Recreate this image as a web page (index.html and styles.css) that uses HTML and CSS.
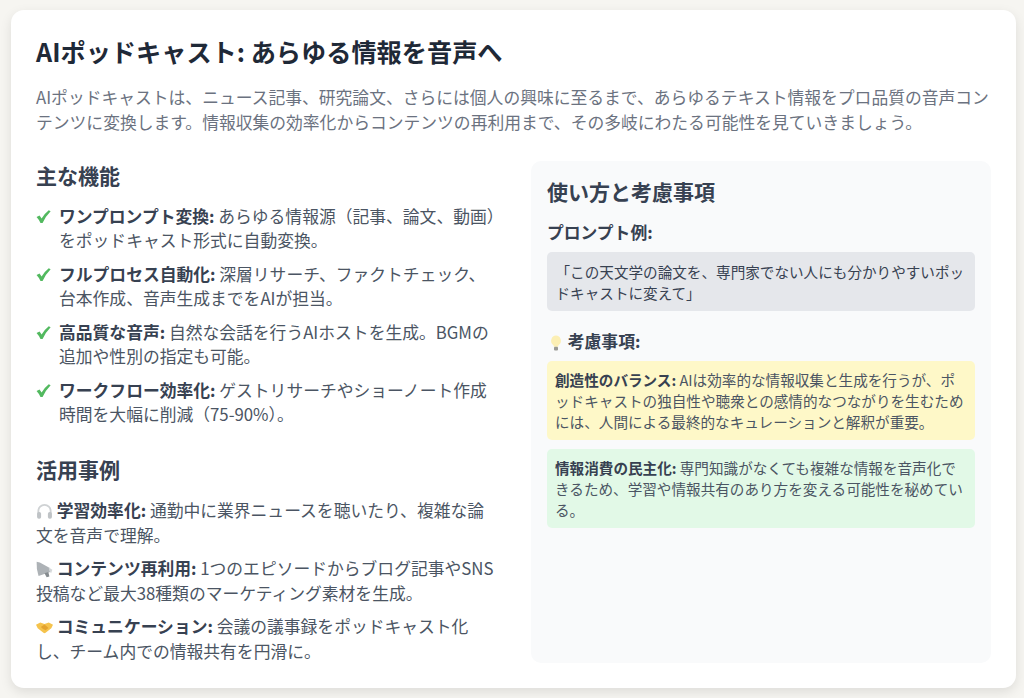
FILE: index.html
```html
<!DOCTYPE html>
<html lang="ja">
<head>
<meta charset="utf-8">
<title>AIポッドキャスト</title>
<link rel="stylesheet" href="styles.css">
</head>
<body>
<main class="card">
  <h1 class="title">AIポッドキャスト: あらゆる情報を音声へ</h1>
  <p class="lede">AIポッドキャストは、ニュース記事、研究論文、さらには個人の興味に至るまで、あらゆるテキスト情報をプロ品質の音声コンテンツに変換します。情報収集の効率化からコンテンツの再利用まで、その多岐にわたる可能性を見ていきましょう。</p>
  <div class="columns">
    <section class="left">
      <h2 class="heading heading-features">主な機能</h2>
      <ul class="features">
        <li class="feature"><svg class="check" viewBox="0 0 16 16"><path d="M0.6 8.6 L3.8 7 L6 10 Q9.4 4.4 13.6 1.2 L15.6 2.4 Q10.2 7.8 7 15 L4.8 15 Q3.2 11.4 0.6 8.6 Z" fill="#52b95f"/></svg><span><b>ワンプロンプト変換:</b> あらゆる情報源（記事、論文、動画）をポッドキャスト形式に自動変換。</span></li>
        <li class="feature"><svg class="check" viewBox="0 0 16 16"><path d="M0.6 8.6 L3.8 7 L6 10 Q9.4 4.4 13.6 1.2 L15.6 2.4 Q10.2 7.8 7 15 L4.8 15 Q3.2 11.4 0.6 8.6 Z" fill="#52b95f"/></svg><span><b>フルプロセス自動化:</b> 深層リサーチ、ファクトチェック、台本作成、音声生成までをAIが担当。</span></li>
        <li class="feature"><svg class="check" viewBox="0 0 16 16"><path d="M0.6 8.6 L3.8 7 L6 10 Q9.4 4.4 13.6 1.2 L15.6 2.4 Q10.2 7.8 7 15 L4.8 15 Q3.2 11.4 0.6 8.6 Z" fill="#52b95f"/></svg><span><b>高品質な音声:</b> 自然な会話を行うAIホストを生成。BGMの追加や性別の指定も可能。</span></li>
        <li class="feature"><svg class="check" viewBox="0 0 16 16"><path d="M0.6 8.6 L3.8 7 L6 10 Q9.4 4.4 13.6 1.2 L15.6 2.4 Q10.2 7.8 7 15 L4.8 15 Q3.2 11.4 0.6 8.6 Z" fill="#52b95f"/></svg><span><b>ワークフロー効率化:</b> ゲストリサーチやショーノート作成時間を大幅に削減（75-90%）。</span></li>
      </ul>
      <h2 class="heading heading-usecases">活用事例</h2>
      <p class="usecase"><svg class="emoji" viewBox="0 0 16 16"><path d="M2.2 10 V7.6 a5.8 5.8 0 0 1 11.6 0 V10" fill="none" stroke="#cfd2d4" stroke-width="1.7"/><rect x="1" y="8.4" width="3.8" height="6.4" rx="1.7" fill="#bfc3c6"/><rect x="11.2" y="8.4" width="3.8" height="6.4" rx="1.7" fill="#bfc3c6"/></svg> <b>学習効率化:</b> 通勤中に業界ニュースを聴いたり、複雑な論文を音声で理解。</p>
      <p class="usecase"><svg class="emoji" viewBox="0 0 16 16"><path d="M0.6 0.6 L3.6 1.4 L13 6.6 L14 10 L2.4 14 Q0.2 7 0.6 0.6 Z" fill="#adb2b6"/><path d="M8 11.6 L11.6 10.4 L12.6 14.6 L10 15.4 Z" fill="#858b8f"/><path d="M12 6 L15.4 8.2 L14.2 11.6 L12.6 9.4 Z" fill="#d5d8da"/></svg> <b>コンテンツ再利用:</b> 1つのエピソードからブログ記事やSNS投稿など最大38種類のマーケティング素材を生成。</p>
      <p class="usecase"><svg class="emoji" viewBox="0 0 16 16"><path d="M0 5.4 L4 3.4 L8 4.6 L12 3.4 L16 5.4 L14.4 8.6 L9 13 Q8 13.6 7 13 L1.6 8.6 Z" fill="#f5c34d"/><path d="M4.6 7.6 L8 5.2 L11.8 8.4 L9 10.6 L6.6 9.4 Z" fill="#e3a32f"/></svg> <b>コミュニケーション:</b> 会議の議事録をポッドキャスト化し、チーム内での情報共有を円滑に。</p>
    </section>
    <aside class="panel">
      <h2 class="heading panel-heading">使い方と考慮事項</h2>
      <h3 class="subheading">プロンプト例:</h3>
      <div class="prompt">「この天文学の論文を、専門家でない人にも分かりやすいポッドキャストに変えて」</div>
      <h3 class="subheading subheading-tips"><svg class="bulb" viewBox="0 0 12 16"><path d="M6 0.6 a5.2 5.2 0 0 1 3 9.2 q-0.8 0.7 -0.9 2 H3.9 q-0.1 -1.3 -0.9 -2 a5.2 5.2 0 0 1 3 -9.2 Z" fill="#fcefb4"/><rect x="4" y="11.8" width="4" height="3.6" rx="1" fill="#9a9a94"/></svg> 考慮事項:</h3>
      <div class="note note-yellow"><b>創造性のバランス:</b> AIは効率的な情報収集と生成を行うが、ポッドキャストの独自性や聴衆との感情的なつながりを生むためには、人間による最終的なキュレーションと解釈が重要。</div>
      <div class="note note-green"><b>情報消費の民主化:</b> 専門知識がなくても複雑な情報を音声化できるため、学習や情報共有のあり方を変える可能性を秘めている。</div>
    </aside>
  </div>
</main>
</body>
</html>
```
FILE: styles.css
```css
* { box-sizing: border-box; }
html, body { height: 100%; }
body {
  margin: 0;
  padding: 10px 8px 10px 11px;
  background: #f6f5f1;
  font-family: "Noto Sans CJK JP", "Noto Sans", sans-serif;
  color: #4b5563;
  overflow: hidden;
}
.card {
  height: 678px;
  padding: 25px;
  background: #fff;
  border-radius: 13px;
  box-shadow: 0 4px 12px rgba(0, 0, 0, 0.1);
  display: flex;
  flex-direction: column;
}
.title {
  margin: 0 0 18px;
  font-size: 25.2px;
  line-height: 32px;
  font-weight: 700;
  color: #1f2937;
}
.lede {
  margin: 0 0 26px;
  font-size: 16.8px;
  line-height: 25px;
  color: #6b7280;
}
.columns {
  flex: 1;
  display: grid;
  grid-template-columns: 460px 460px;
  grid-template-rows: minmax(0, 1fr);
  column-gap: 35px;
  min-height: 0;
}
.heading {
  margin: 0;
  font-size: 21px;
  line-height: 30px;
  font-weight: 700;
  color: #374151;
}
.heading-features { line-height: 28px; }
.features {
  list-style: none;
  margin: 15px 0 0;
  padding: 0;
}
.feature {
  display: flex;
  gap: 8px;
  margin-bottom: 10px;
  font-size: 16.8px;
  line-height: 24px;
}
.check {
  flex: none;
  width: 15px;
  height: 15px;
  margin-top: 5px;
}
b { font-weight: 700; color: #374151; }
.heading-usecases { margin-top: 28px; margin-bottom: 14px; }
.usecase {
  margin: 0 0 9px;
  font-size: 16.8px;
  line-height: 24.5px;
}
.usecase:last-child { margin-bottom: 0; }
.emoji {
  width: 17px;
  height: 17px;
  vertical-align: -3px;
}
.panel {
  padding: 15px 16px;
  background: #f9fafb;
  border-radius: 10px;
}
.subheading {
  margin: 14px 0 8px;
  font-size: 16.8px;
  line-height: 24px;
  font-weight: 700;
  color: #374151;
}
.prompt {
  padding: 8.5px;
  background: #e5e7eb;
  border-radius: 5px;
  font-size: 14.6px;
  line-height: 21px;
  color: #374151;
}
.subheading-tips { margin-top: 18px; margin-bottom: 8px; }
.bulb {
  width: 12px;
  height: 16px;
  vertical-align: -3px;
  margin-left: 3px;
  margin-right: 2px;
}
.note {
  padding: 8px;
  border-radius: 5px;
  font-size: 14.6px;
  line-height: 21px;
  margin-bottom: 8.5px;
}
.note-yellow { background: #fef8c8; }
.note-green { background: #e2f9e7; }
```
